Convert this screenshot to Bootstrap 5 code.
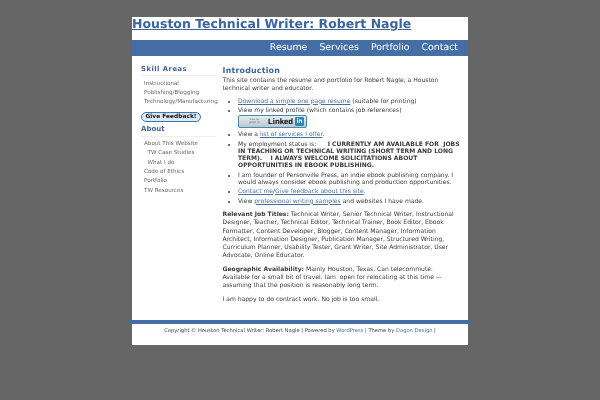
<!DOCTYPE html>
<html lang="en">
<head>
<meta charset="utf-8">
<title>Houston Technical Writer: Robert Nagle</title>
<link href="https://cdn.jsdelivr.net/npm/bootstrap@5.3.0/dist/css/bootstrap.min.css" rel="stylesheet">
<style>
html,body{height:100%}
body{background:#666;font-family:"DejaVu Sans",sans-serif;font-size:6.05px;line-height:8.2px;color:#3a3a3a;padding-top:17px;text-rendering:geometricPrecision}
a{color:#4a6f9f}
.sheet{width:336px;margin:0 auto;background:#fff;height:328px;filter:blur(.25px)}
.site-title{height:23px;font-size:12.5px;line-height:14px;font-weight:700;margin:0;white-space:nowrap}
.site-title a{color:#3e659b}
.brand-band{height:16px;background:#466ea6;gap:12px;padding-right:10px}
.brand-band a{color:#fff;font-size:9.4px;line-height:16px;text-decoration:none}
.body-row{height:264px}
.side{width:90.5px;flex:none;padding-left:9px;padding-top:8.5px}
.side-head{font-size:6.8px;line-height:9px;font-weight:700;letter-spacing:.5px;color:#3e659b;padding-bottom:1.5px;border-bottom:1px solid #eee;width:75px;margin:0 0 3.5px;white-space:nowrap}
.side-head.bigger{font-size:7px;letter-spacing:0;padding-bottom:2px;margin-bottom:3px}
.side ul{list-style:none;margin:0;padding:0 0 0 3px;font-size:5.6px;line-height:9.4px;white-space:nowrap}
.side li a,.side li{color:#666;text-decoration:none}
.side ul ul{padding-left:3.5px;line-height:9.4px}
.fb-btn{margin:4.5px 0 2.5px;width:60px;height:10px;border:1.5px solid #3f78ad;background:#dbe9f5;border-radius:5px;color:#111;font-size:5.9px;line-height:7px;font-weight:700;white-space:nowrap}
.main{width:237px;flex:none;padding-top:8.5px}
.main h2{font-size:7.9px;line-height:12.4px;font-weight:700;color:#3e659b;margin:0;letter-spacing:.2px}
.main p{margin:0 0 5.7px}
.main p.intro-text{margin-bottom:4.4px}
.main ul{margin:0 0 6.2px;padding-left:15.5px}
.main li{line-height:7.3px;margin-bottom:2px}
.li-badge{display:flex;align-items:center;width:68.5px;height:13px;margin:.5px 0 3.5px;border:1px solid #4d87a8;border-radius:2px;background:linear-gradient(#e6edf1,#b7c7d4);font-family:"Liberation Sans",sans-serif;font-size:7.8px;font-weight:700;color:#000;line-height:11px;white-space:nowrap;overflow:hidden;padding-left:8px}
.li-badge small{font-size:2.6px;line-height:3px;font-weight:400;color:#666;width:15px;margin-right:6px;text-align:center;white-space:normal}
.li-badge b{background:#2f86b8;color:#fff;font-size:6.5px;line-height:9px;padding:0 1.5px;border-radius:1px;margin-left:2px}
.foot{border-top:4.5px solid #466ea6;margin:0 -3px;padding:0 3px}
.foot-in{height:20px;font-size:5.2px;line-height:15px;text-align:center;color:#444;white-space:nowrap}
.foot-in a{text-decoration:none}
</style>
</head>
<body>
<div class="sheet">
  <h1 class="site-title"><a href="#">Houston Technical Writer: Robert Nagle</a></h1>
  <nav class="brand-band d-flex justify-content-end">
    <a href="#">Resume</a><a href="#">Services</a><a href="#">Portfolio</a><a href="#">Contact</a>
  </nav>
  <div class="body-row d-flex">
    <aside class="side">
      <h3 class="side-head">Skill Areas</h3>
      <ul>
        <li><a href="#">Instructional</a></li>
        <li><a href="#">Publishing/Blogging</a></li>
        <li><a href="#">Technology/Manufacturing</a></li>
      </ul>
      <a class="fb-btn d-flex align-items-center justify-content-center text-decoration-none" href="#">Give Feedback!</a>
      <h3 class="side-head bigger">About</h3>
      <ul>
        <li><a href="#">About This Website</a>
          <ul><li><a href="#">TW Case Studies</a></li><li><a href="#">What I do</a></li></ul>
        </li>
        <li><a href="#">Code of Ethics</a></li>
        <li><a href="#">Portfolio</a></li>
        <li><a href="#">TW Resources</a></li>
      </ul>
    </aside>
    <main class="main">
      <h2>Introduction</h2>
      <p class="intro-text">This site contains the resume and portfolio for Robert Nagle, a Houston technical writer and educator.</p>
      <ul>
        <li><a href="#">Download a simple one page resume</a> (suitable for printing)</li>
        <li>View my linked profile (which contains job references)
          <a class="li-badge text-decoration-none" href="#"><small>View my profile on</small>Linked<b>in</b></a></li>
        <li>View a <a href="#">list of services I offer</a>.</li>
        <li>My employment status is: &nbsp; &nbsp; &nbsp;<strong>I CURRENTLY AM AVAILABLE FOR &nbsp;JOBS IN TEACHING OR TECHNICAL WRITING (SHORT TERM AND LONG TERM). &nbsp; &nbsp;I ALWAYS WELCOME SOLICITATIONS ABOUT OPPORTUNITIES IN EBOOK PUBLISHING.</strong></li>
        <li>I am founder of Personville Press, an indie ebook publishing company. I would always consider ebook publishing and production opportunities.</li>
        <li><a href="#">Contact me</a>/<a href="#">Give feedback about this site</a>.</li>
        <li>View <a href="#">professional writing samples</a> and websites I have made.</li>
      </ul>
      <p><strong>Relevant Job Titles:</strong> Technical Writer, Senior Technical Writer, Instructional Designer, Teacher, Technical Editor, Technical Trainer, Book Editor, Ebook Formatter, Content Developer, Blogger, Content Manager, Information Architect, Information Designer, Publication Manager, Structured Writing, Curriculum Planner, Usability Tester, Grant Writer, Site Administrator, User Advocate, Online Educator.</p>
      <p><strong>Geographic Availability:</strong> Mainly Houston, Texas. Can telecommute. Available for a small bit of travel. Iam &nbsp;open for relocating at this time — assuming that the position is reasonably long term.</p>
      <p>I am happy to do contract work. No job is too small.</p>
    </main>
  </div>
  <footer class="foot">
    <div class="foot-in">Copyright © Houston Technical Writer: Robert Nagle | Powered by <a href="#">WordPress</a> | Theme by <a href="#">Dagon Design</a> |</div>
  </footer>
</div>
<script src="https://cdn.jsdelivr.net/npm/bootstrap@5.3.0/dist/js/bootstrap.bundle.min.js"></script>
</body>
</html>
